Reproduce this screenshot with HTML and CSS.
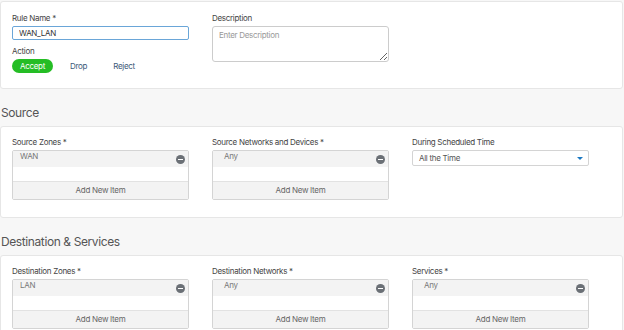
FILE: index.html
```html
<!DOCTYPE html>
<html>
<head>
	<title>Firewall Rule</title>
	<link rel="stylesheet" href="styles.css">
</head>
<body>
<div class="page">
	<div class="card rule">
		<div class="cols">
			<div class="field">
				<label>Rule Name *</label>
				<input type="text" class="text focus" value="WAN_LAN">
				<label class="action-label">Action</label>
				<div class="actions">
					<span class="act on">Accept</span>
					<span class="act drop">Drop</span>
					<span class="act reject">Reject</span>
				</div>
			</div>
			<div class="field">
				<label>Description</label>
				<textarea class="desc" placeholder="Enter Description"></textarea>
			</div>
		</div>
	</div>

	<h2>Source</h2>
	<div class="card">
		<div class="cols">
			<div class="field">
				<label>Source Zones *</label>
				<div class="list">
					<div class="item">WAN<span class="minus"></span></div>
					<div class="gap"></div>
					<div class="add">Add New Item</div>
				</div>
			</div>
			<div class="field">
				<label>Source Networks and Devices *</label>
				<div class="list">
					<div class="item any">Any<span class="minus"></span></div>
					<div class="gap"></div>
					<div class="add">Add New Item</div>
				</div>
			</div>
			<div class="field">
				<label>During Scheduled Time</label>
				<div class="select">All the Time<span class="caret"></span></div>
			</div>
		</div>
	</div>

	<h2>Destination &amp; Services</h2>
	<div class="card">
		<div class="cols">
			<div class="field">
				<label>Destination Zones *</label>
				<div class="list">
					<div class="item">LAN<span class="minus"></span></div>
					<div class="gap"></div>
					<div class="add">Add New Item</div>
				</div>
			</div>
			<div class="field">
				<label>Destination Networks *</label>
				<div class="list">
					<div class="item any">Any<span class="minus"></span></div>
					<div class="gap"></div>
					<div class="add">Add New Item</div>
				</div>
			</div>
			<div class="field">
				<label>Services *</label>
				<div class="list">
					<div class="item any">Any<span class="minus"></span></div>
					<div class="gap"></div>
					<div class="add">Add New Item</div>
				</div>
			</div>
		</div>
	</div>
</div>
</body>
</html>
```
FILE: styles.css
```css
html{
	background-color: #f7f7f7;
}
body{
	margin: 0;
	font-family: Inter, "Liberation Sans", sans-serif;
	font-size: 8px;
	letter-spacing: -0.3px;
	color: #444;
}
.page{
	width: 623px;
	padding-top: 1px;
	overflow: hidden;
	height: 329px;
}
.card{
	background-color: #fff;
	border: 1px solid #e6e6e6;
	border-radius: 3px;
	padding: 10px 11px 17px 11px;
}
.rule{
	padding-top: 11px;
	height: 58px;
}
.cols{
	display: grid;
	grid-template-columns: 177px 177px 177px;
	column-gap: 23px;
}
.field label{
	display: block;
	line-height: 10px;
	margin-bottom: 3px;
}
h2{
	font-size: 12px;
	letter-spacing: -0.4px;
	font-weight: normal;
	color: #555;
	margin: 16px 0 5px 1px;
	line-height: 16px;
}
.text{
	box-sizing: border-box;
	width: 177px;
	height: 14px;
	border: 1px solid #ccc;
	border-radius: 2px;
	padding: 0 6px;
	font-family: inherit;
	font-size: 8px;
	letter-spacing: -0.3px;
	color: #333;
	margin: 0;
	display: block;
}
.focus{
	border-color: #6aa6d8;
}
.action-label{
	margin-top: 6px;
}
.action-label + .actions{
	margin-top: 3px;
}
.actions{
	display: flex;
	align-items: center;
}
.act{
	height: 14px;
	line-height: 14px;
	text-align: center;
	color: #3a5878;
}
.act.on{
	width: 41px;
	background-color: #25bd25;
	color: #fff;
	border-radius: 7px;
}
.drop{
	margin-left: 17px;
}
.reject{
	margin-left: 26px;
}
.desc{
	box-sizing: border-box;
	display: block;
	width: 177px;
	height: 36px;
	border: 1px solid #ccc;
	border-radius: 3px;
	padding: 3px 6px;
	font-family: inherit;
	font-size: 8px;
	letter-spacing: -0.3px;
	margin: 0;
	resize: vertical;
}
.desc::placeholder{
	color: #999;
}
.list{
	border: 1px solid #d4d4d4;
	border-radius: 2px;
	color: #777;
}
.item{
	position: relative;
	height: 16px;
	line-height: 11px;
	padding: 0 7px;
	background-color: #f3f3f3;
}
.item.any{
	padding-left: 11px;
}
.minus{
	position: absolute;
	right: 3px;
	top: 4px;
	width: 9px;
	height: 9px;
	border-radius: 50%;
	background-color: #6b7076;
}
.minus::after{
	content: "";
	position: absolute;
	left: 2px;
	top: 4px;
	width: 5px;
	height: 1px;
	background-color: #fff;
}
.gap{
	height: 14px;
}
.add{
	height: 17px;
	line-height: 17px;
	text-align: center;
	background-color: #f3f3f3;
	border-top: 1px solid #e2e2e2;
	color: #666;
}
.select{
	position: relative;
	box-sizing: border-box;
	height: 16px;
	line-height: 14px;
	border: 1px solid #d4d4d4;
	border-radius: 2px;
	padding: 0 6px;
	color: #555;
}
.caret{
	position: absolute;
	right: 5px;
	top: 6px;
	width: 0;
	height: 0;
	border-left: 3px solid transparent;
	border-right: 3px solid transparent;
	border-top: 3px solid #1a78c2;
}
```
